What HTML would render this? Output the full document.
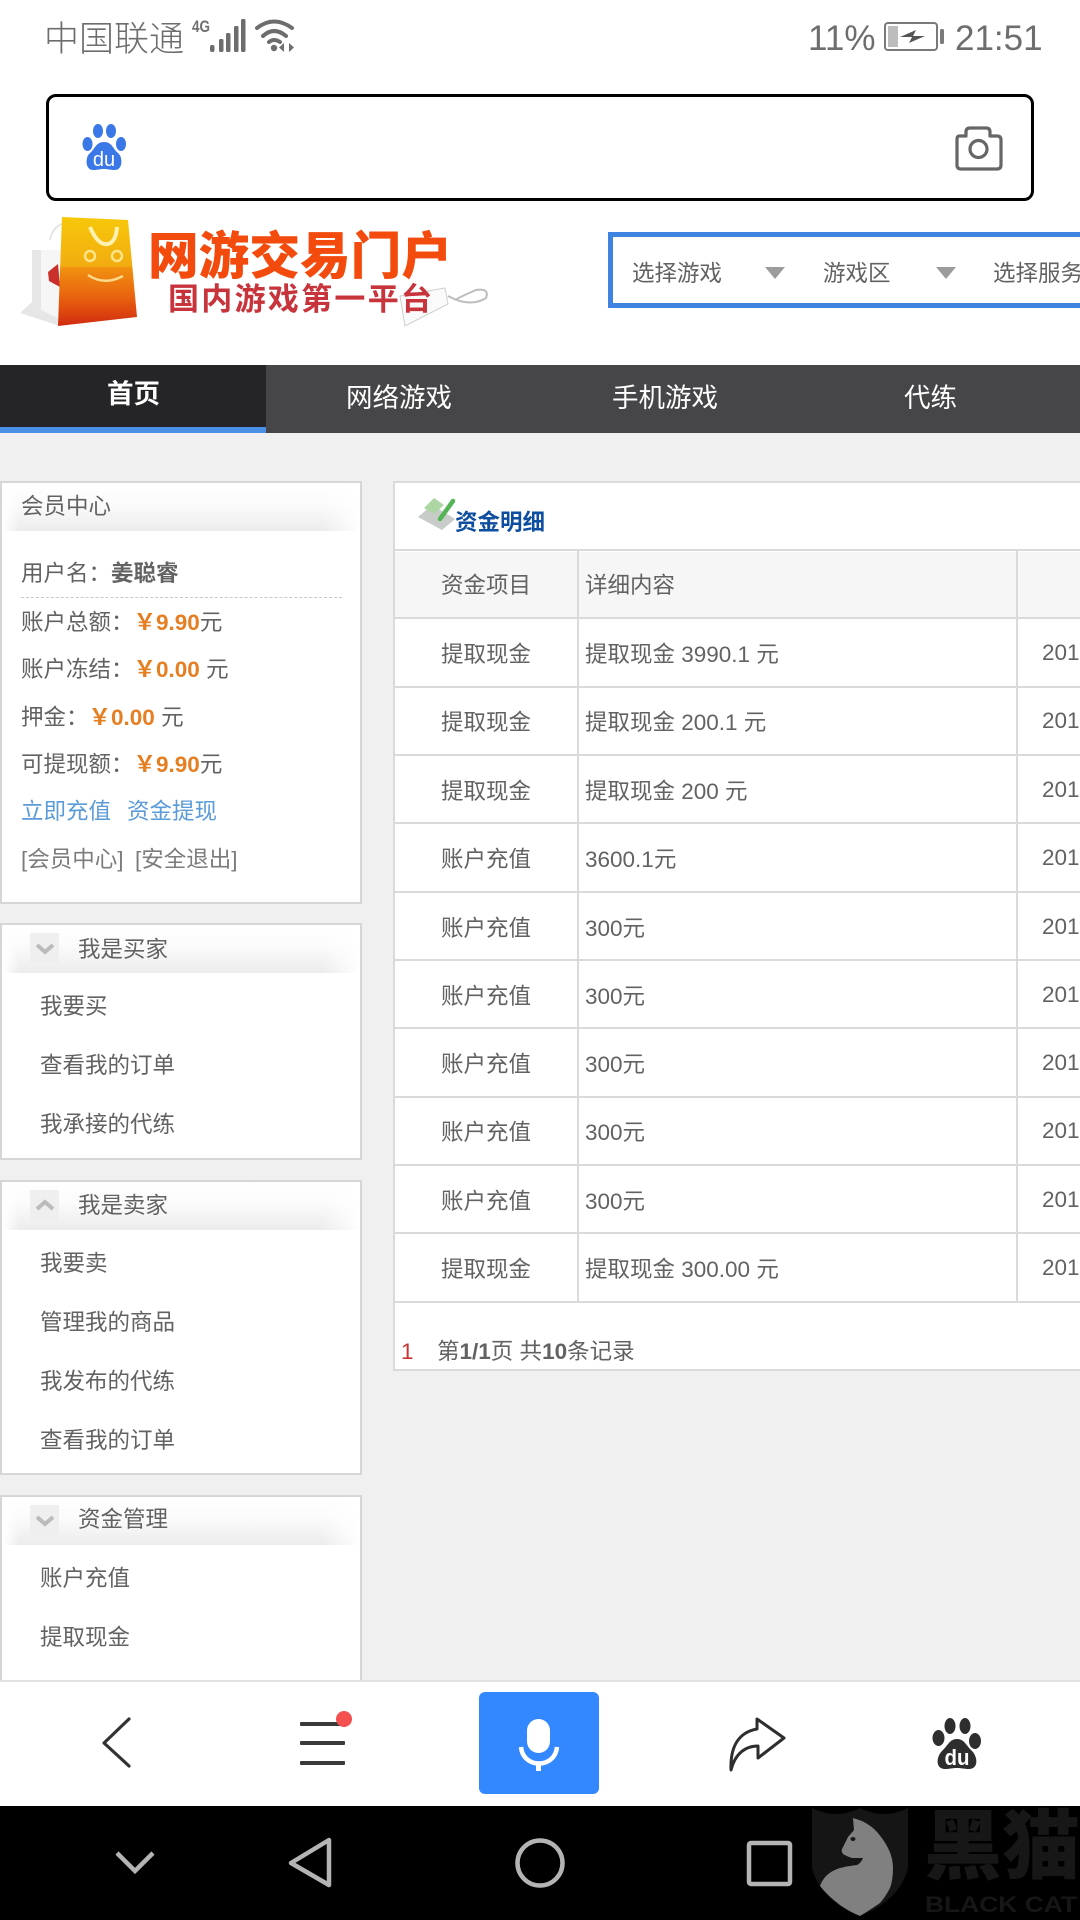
<!DOCTYPE html>
<html lang="zh">
<head>
<meta charset="utf-8">
<title>资金明细</title>
<style>
html,body{margin:0;padding:0;width:1080px;height:1920px;overflow:hidden;background:#f0f0f0}
body{position:relative;font-family:"Liberation Sans","Noto Sans CJK SC",sans-serif;color:#626262;font-size:22.5px}
.t{position:absolute;white-space:nowrap;line-height:34px;height:34px;margin-top:2px}
.b{position:absolute;box-sizing:border-box}
.panel{position:absolute;left:0;width:362px;background:#fff;border:2px solid #d6d6d6;box-sizing:border-box}
.hd{position:absolute;left:3px;width:357px;height:48px;background:linear-gradient(to bottom,#fff 0%,#fbfbfb 45%,#ececec 100%);-webkit-mask-image:linear-gradient(to right,transparent 0,#000 16px,#000 320px,transparent 100%)}
.o{color:#e67e22;font-weight:700}
.l{color:#5b9bd8}
svg{position:absolute;overflow:visible}
.ic{position:absolute;left:30px;width:29px;height:30px;background:#efefef}
</style>
</head>
<body>

<!-- top white area -->
<div class="b" style="left:0;top:0;width:1080px;height:365px;background:#fff"></div>

<!-- status bar -->
<div class="t" style="left:44px;top:20px;font-size:35px;color:#6d6d6d;font-weight:300;line-height:36px;height:36px;">中国联通</div>
<div class="t" style="left:808px;top:19px;font-size:35px;color:#6d6d6d;line-height:36px;height:36px;">11%</div>
<div class="t" style="left:955px;top:19px;font-size:35px;color:#6d6d6d;line-height:36px;height:36px;">21:51</div>

<svg style="left:0;top:0" width="1080" height="60" viewBox="0 0 1080 60">
  <text x="192" y="32" font-size="17" font-weight="700" fill="#707070" font-family="Liberation Sans" textLength="18" lengthAdjust="spacingAndGlyphs">4G</text>
  <g fill="#6d6d6d">
    <rect x="210" y="45" width="4.5" height="7" rx="2"/>
    <rect x="219" y="39" width="4.5" height="13" rx="1.5"/>
    <rect x="226" y="33" width="4.5" height="19" rx="1.5"/>
    <rect x="234" y="26" width="4.5" height="26" rx="1.5"/>
    <rect x="241" y="19" width="4.5" height="33" rx="1.5"/>
  </g>
  <g fill="none" stroke="#6d6d6d" stroke-width="4" stroke-linecap="round">
    <path d="M257 28Q274 15 292 28"/>
    <path d="M263 36Q274 26 286 36"/>
    <path d="M269 42Q274 38 280 42"/>
  </g>
  <circle cx="274" cy="48" r="3.2" fill="#6d6d6d"/>
  <path d="M284 43V52L279 47.5ZM289 43V52L294 47.5Z" fill="#6d6d6d"/>
  <rect x="885" y="23" width="52" height="27" rx="3" fill="none" stroke="#7a7a7a" stroke-width="2"/>
  <rect x="888" y="26" width="10" height="21" fill="#bdbdbd"/>
  <path d="M900 37L916 30L913 36L925 36L909 43L912 37Z" fill="#555"/>
  <rect x="940" y="29" width="4" height="15" rx="1.5" fill="#7a7a7a"/>
</svg>

<!-- search box -->
<div class="b" style="left:46px;top:94px;width:988px;height:107px;border:3px solid #000;border-radius:10px;background:#fff"></div>
<svg style="left:82px;top:124px" width="44" height="48" viewBox="0 0 44 48">
  <g fill="#3b78e7">
    <ellipse cx="16" cy="7" rx="5" ry="7"/>
    <ellipse cx="29" cy="7" rx="5" ry="7"/>
    <ellipse cx="5.5" cy="20" rx="5" ry="7"/>
    <ellipse cx="39" cy="20" rx="5" ry="7"/>
    <path d="M22 18C30 18 31 25 36 29C41 33 41 46 33 46C28 46 26 45 22 45C18 45 16 46 11 46C3 46 3 33 8 29C13 25 14 18 22 18Z"/>
  </g>
  <text x="22" y="42" text-anchor="middle" font-size="20" fill="#fff" font-family="Liberation Sans">du</text>
</svg>
<svg style="left:955px;top:126px" width="48" height="44" viewBox="0 0 48 44">
  <path d="M4 10H11V6Q11 2 15 2H31Q35 2 35 6V10H42Q46 10 46 14V39Q46 43 42 43H6Q2 43 2 39V14Q2 10 4 10Z" fill="none" stroke="#666" stroke-width="3.2" stroke-linejoin="round"/>
  <circle cx="23.5" cy="23" r="8.5" fill="none" stroke="#666" stroke-width="3.2"/>
</svg>

<!-- logo -->
<svg style="left:0;top:200px" width="500" height="150" viewBox="0 0 500 150">
  <defs>
    <linearGradient id="bag" x1="0" y1="0" x2="0" y2="1">
      <stop offset="0" stop-color="#f7c80a"/>
      <stop offset=".45" stop-color="#f2ac10"/>
      <stop offset=".47" stop-color="#f09010"/>
      <stop offset=".75" stop-color="#e8600e"/>
      <stop offset="1" stop-color="#d02a10"/>
    </linearGradient>
  </defs>
  <path d="M32 50H62V124L60 126L20 113L32 102Z" fill="#e6e6e6"/>
  <path d="M41 50H62V120L41 110Z" fill="#f6f6f6"/>
  <path d="M50 40Q52 28 62 24" fill="none" stroke="#e0e0e0" stroke-width="1.5"/>
  <path d="M48 72L58 64L60 87L49 81Z" fill="#c9302c"/>
  <path d="M62 17L128 20L137 117L58 126Z" fill="url(#bag)"/>
  <path d="M90 27Q98 46 108 44Q116 42 117 27" fill="none" stroke="#fff1b0" stroke-width="4"/>
  <circle cx="90" cy="56" r="5" fill="none" stroke="#fde58a" stroke-width="2.5"/>
  <circle cx="117" cy="56" r="5" fill="none" stroke="#fde58a" stroke-width="2.5"/>
  <path d="M88 75Q104 86 123 76" fill="none" stroke="#fcd98a" stroke-width="2.5"/>
  <path d="M400 96L445 88L448 104L405 126Z" fill="#fafafa" stroke="#cfcfcf" stroke-width="1"/>
  <path d="M448 96Q470 108 486 98Q490 88 476 90Q462 96 455 100" fill="none" stroke="#bdbdbd" stroke-width="2"/>
  <text x="148" y="74" font-size="51" font-weight="900" fill="#f34a0d" font-family="Noto Sans CJK SC" textLength="304" lengthAdjust="spacingAndGlyphs">网游交易门户</text>
  <text x="168" y="110" font-size="31" font-weight="700" fill="#c8343c" font-family="Noto Sans CJK SC" textLength="264">国内游戏第一平台</text>
</svg>

<!-- game select -->
<div class="b" style="left:608px;top:232px;width:500px;height:76px;border:5px solid #3f83e0;background:#fff"></div>
<div class="t" style="left:632px;top:255px;">选择游戏</div>
<div class="t" style="left:823px;top:255px;">游戏区</div>
<div class="t" style="left:993px;top:255px;">选择服务器</div>
<svg style="left:0;top:0" width="1080" height="300" viewBox="0 0 1080 300">
  <path d="M765 267H785L775 279Z" fill="#9c9c9c"/>
  <path d="M936 267H956L946 279Z" fill="#9c9c9c"/>
</svg>

<!-- nav -->
<div class="b" style="left:0;top:365px;width:1080px;height:68px;background:#464649"></div>
<div class="b" style="left:0;top:365px;width:266px;height:68px;background:#252527;border-bottom:6px solid #4a90e6"></div>
<div class="t" style="left:107px;top:375px;color:#fff;font-size:26.5px;font-weight:700;">首页</div>
<div class="t" style="left:346px;top:379px;color:#fff;font-size:26.5px;">网络游戏</div>
<div class="t" style="left:612px;top:379px;color:#fff;font-size:26.5px;">手机游戏</div>
<div class="t" style="left:904px;top:379px;color:#fff;font-size:26.5px;">代练</div>

<!-- left panels -->
<div class="panel" style="top:481px;height:423px;"></div>
<div class="hd" style="top:483px"></div>
<div class="t" style="left:21px;top:488px;">会员中心</div>
<div class="t" style="left:21px;top:555px;">用户名：<b>姜聪睿</b></div>
<div class="b" style="left:21px;top:597px;width:321px;height:0;border-top:1px dashed #c8c8c8"></div>
<div class="t" style="left:21px;top:604px;">账户总额：<span class="o">￥9.90</span>元</div>
<div class="t" style="left:21px;top:651px;">账户冻结：<span class="o">￥0.00</span> 元</div>
<div class="t" style="left:21px;top:699px;">押金：<span class="o">￥0.00</span> 元</div>
<div class="t" style="left:21px;top:746px;">可提现额：<span class="o">￥9.90</span>元</div>
<div class="t l" style="left:21px;top:793px;">立即充值</div>
<div class="t l" style="left:127px;top:793px;">资金提现</div>
<div class="t" style="left:21px;top:841px;color:#7c7c7c;">[会员中心]</div>
<div class="t" style="left:135px;top:841px;color:#7c7c7c;">[安全退出]</div>

<div class="panel" style="top:923px;height:237px;"></div>
<div class="hd" style="top:925px"></div>
<div class="ic" style="top:933px"></div>
<div class="t" style="left:78px;top:931px;">我是买家</div>
<div class="t" style="left:40px;top:988px;">我要买</div>
<div class="t" style="left:40px;top:1047px;">查看我的订单</div>
<div class="t" style="left:40px;top:1106px;">我承接的代练</div>

<div class="panel" style="top:1180px;height:295px;"></div>
<div class="hd" style="top:1182px"></div>
<div class="ic" style="top:1190px"></div>
<div class="t" style="left:78px;top:1187px;">我是卖家</div>
<div class="t" style="left:40px;top:1245px;">我要卖</div>
<div class="t" style="left:40px;top:1304px;">管理我的商品</div>
<div class="t" style="left:40px;top:1363px;">我发布的代练</div>
<div class="t" style="left:40px;top:1422px;">查看我的订单</div>

<div class="panel" style="top:1495px;height:200px;"></div>
<div class="hd" style="top:1497px"></div>
<div class="ic" style="top:1505px"></div>
<div class="t" style="left:78px;top:1501px;">资金管理</div>
<div class="t" style="left:40px;top:1560px;">账户充值</div>
<div class="t" style="left:40px;top:1619px;">提取现金</div>

<svg style="left:0;top:0" width="120" height="1600" viewBox="0 0 120 1600">
  <path d="M37 945L45 952L53 945" fill="none" stroke="#bbb" stroke-width="4"/>
  <path d="M37 1209L45 1202L53 1209" fill="none" stroke="#bbb" stroke-width="4"/>
  <path d="M37 1517L45 1524L53 1517" fill="none" stroke="#bbb" stroke-width="4"/>
</svg>

<!-- right panel -->
<div class="b" style="left:393px;top:481px;width:700px;height:890px;background:#fff;border:2px solid #dadada"></div>
<div class="b" style="left:395px;top:552px;width:685px;height:65px;background:#f6f6f6"></div>
<svg style="left:0;top:0" width="1080" height="1400" viewBox="0 0 1080 1400">
  <g fill="#dadada">
    <rect x="393" y="549" width="687" height="2"/>
    <rect x="393" y="617" width="687" height="2"/>
    <rect x="393" y="686" width="687" height="2"/>
    <rect x="393" y="754" width="687" height="2"/>
    <rect x="393" y="822" width="687" height="2"/>
    <rect x="393" y="891" width="687" height="2"/>
    <rect x="393" y="959" width="687" height="2"/>
    <rect x="393" y="1027" width="687" height="2"/>
    <rect x="393" y="1096" width="687" height="2"/>
    <rect x="393" y="1164" width="687" height="2"/>
    <rect x="393" y="1232" width="687" height="2"/>
    <rect x="393" y="1301" width="687" height="2"/>
    <rect x="577" y="550" width="2" height="752"/>
    <rect x="1016" y="550" width="2" height="752"/>
  </g>
  <path d="M418 517L432 505L455 519L442 530Z" fill="#c8ccc8"/>
  <path d="M424 508L434 498L444 505L434 514Z" fill="#aed6a4"/>
  <path d="M440 519L453 501" stroke="#55b555" stroke-width="4.5" stroke-linecap="round"/>
</svg>
<div class="t" style="left:455px;top:504px;color:#0e4ea0;font-weight:700;">资金明细</div>

<div class="t" style="left:441px;top:567px;">资金项目</div><div class="t" style="left:585px;top:567px;">详细内容</div>
<div class="t" style="left:441px;top:636px;">提取现金</div><div class="t" style="left:585px;top:636px;">提取现金 3990.1 元</div><div class="t" style="left:1042px;top:634px;">2018</div>
<div class="t" style="left:441px;top:704px;">提取现金</div><div class="t" style="left:585px;top:704px;">提取现金 200.1 元</div><div class="t" style="left:1042px;top:702px;">2018</div>
<div class="t" style="left:441px;top:773px;">提取现金</div><div class="t" style="left:585px;top:773px;">提取现金 200 元</div><div class="t" style="left:1042px;top:771px;">2018</div>
<div class="t" style="left:441px;top:841px;">账户充值</div><div class="t" style="left:585px;top:841px;">3600.1元</div><div class="t" style="left:1042px;top:839px;">2018</div>
<div class="t" style="left:441px;top:910px;">账户充值</div><div class="t" style="left:585px;top:910px;">300元</div><div class="t" style="left:1042px;top:908px;">2018</div>
<div class="t" style="left:441px;top:978px;">账户充值</div><div class="t" style="left:585px;top:978px;">300元</div><div class="t" style="left:1042px;top:976px;">2018</div>
<div class="t" style="left:441px;top:1046px;">账户充值</div><div class="t" style="left:585px;top:1046px;">300元</div><div class="t" style="left:1042px;top:1044px;">2018</div>
<div class="t" style="left:441px;top:1114px;">账户充值</div><div class="t" style="left:585px;top:1114px;">300元</div><div class="t" style="left:1042px;top:1112px;">2018</div>
<div class="t" style="left:441px;top:1183px;">账户充值</div><div class="t" style="left:585px;top:1183px;">300元</div><div class="t" style="left:1042px;top:1181px;">2018</div>
<div class="t" style="left:441px;top:1251px;">提取现金</div><div class="t" style="left:585px;top:1251px;">提取现金 300.00 元</div><div class="t" style="left:1042px;top:1249px;">2018</div>

<div class="t" style="left:401px;top:1333px;color:#c33;">1</div>
<div class="t" style="left:437px;top:1333px;">第<b>1/1</b>页 共<b>10</b>条记录</div>

<!-- bottom browser bar -->
<div class="b" style="left:0;top:1680px;width:1080px;height:126px;background:#fff;border-top:2px solid #e2e2e2"></div>
<div class="b" style="left:479px;top:1692px;width:120px;height:102px;background:#3388ff;border-radius:6px"></div>
<svg style="left:0;top:1680px" width="1080" height="126" viewBox="0 1680 1080 126">
  <path d="M129 1719L104 1743L129 1766" fill="none" stroke="#333" stroke-width="3.2" stroke-linecap="round" stroke-linejoin="round"/>
  <g fill="#3a3a3a">
    <rect x="300" y="1722" width="45" height="4" rx="1"/>
    <rect x="300" y="1741" width="45" height="4" rx="1"/>
    <rect x="300" y="1761" width="45" height="4" rx="1"/>
  </g>
  <circle cx="344" cy="1719" r="8" fill="#f4504f"/>
  <rect x="527" y="1719" width="23" height="34" rx="11.5" fill="#fff"/>
  <path d="M521 1747C523 1769 555 1769 557 1747" fill="none" stroke="#fff" stroke-width="4.5"/>
  <rect x="536" y="1762" width="5" height="9" fill="#fff"/>
  <path d="M757 1719L784 1738L758 1758V1746C745 1746 735 1754 731 1770C730 1745 740 1732 757 1729Z" fill="none" stroke="#2e2e2e" stroke-width="3" stroke-linejoin="round"/>
  <g fill="#2e2e2e">
    <ellipse cx="950" cy="1726" rx="5.5" ry="8"/>
    <ellipse cx="965" cy="1726" rx="5.5" ry="8"/>
    <ellipse cx="938.500" cy="1738" rx="6" ry="8"/>
    <ellipse cx="975" cy="1741" rx="6" ry="8"/>
    <path d="M957 1739C964 1739 966 1745 971 1750C978 1756 979 1769 969 1769C964 1769 962 1768 957 1768C952 1768 950 1769 945 1769C935 1769 936 1756 943 1750C948 1745 950 1739 957 1739Z"/>
  </g>
  <text x="957" y="1765" text-anchor="middle" font-size="22" fill="#fff" font-family="Liberation Sans" font-weight="700" textLength="25" lengthAdjust="spacingAndGlyphs">du</text>
</svg>

<!-- android nav -->
<div class="b" style="left:0;top:1806px;width:1080px;height:114px;background:#000"></div>
<svg style="left:0;top:1806px" width="1080" height="114" viewBox="0 1806 1080 114">
  <path d="M117 1853L135 1871L153 1853" fill="none" stroke="#b4b4b4" stroke-width="4.5"/>
  <path d="M329 1840V1885L291 1863Z" fill="none" stroke="#b4b4b4" stroke-width="4.5" stroke-linejoin="round"/>
  <circle cx="540" cy="1863" r="22.5" fill="none" stroke="#b4b4b4" stroke-width="4.5"/>
  <rect x="749" y="1843" width="41" height="41" rx="2" fill="none" stroke="#b4b4b4" stroke-width="4.5"/>
  <path d="M812 1808Q836 1820 860 1808Q884 1820 908 1808V1868Q900 1900 860 1916Q820 1900 812 1868Z" fill="#151515"/>
  <path d="M853 1818L862 1821Q872 1826 877 1832Q884 1840 888 1848Q893 1858 893 1868Q893 1880 890 1888Q886 1896 880 1903Q870 1910 860 1916Q850 1912 840 1905Q828 1896 820 1886Q822 1880 827 1875Q833 1870 840 1868Q848 1866 857 1865Q861 1863 863 1858L852 1858Q846 1856 843 1854Q841 1851 842 1849L848 1837L854 1830Z" fill="#808080"/>
  <ellipse cx="853" cy="1839" rx="2.500" ry="2" fill="#1a1a1a"/>
  <text x="924" y="1873" font-size="76" font-weight="900" fill="#171717" font-family="Noto Sans CJK SC" textLength="156" lengthAdjust="spacingAndGlyphs">黑猫</text>
  <text x="925" y="1912" font-size="22" font-weight="700" fill="#161616" font-family="Liberation Sans" textLength="152" lengthAdjust="spacingAndGlyphs">BLACK CAT</text>
</svg>

</body>
</html>
